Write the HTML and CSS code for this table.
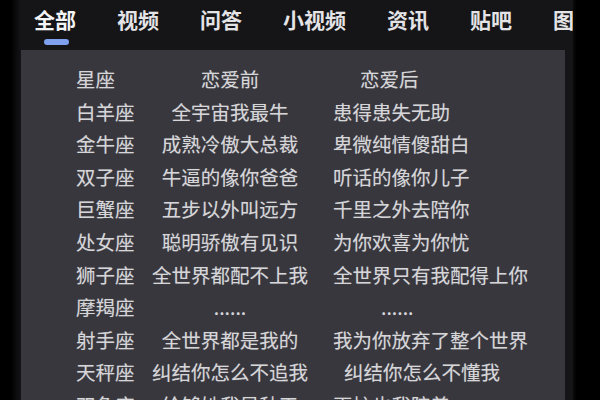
FILE: index.html
```html
<!DOCTYPE html>
<html lang="zh-CN">
<head>
<meta charset="utf-8">
<title>星座 恋爱前 恋爱后</title>
<link rel="stylesheet" href="styles.css">
</head>
<body>
<div class="frame">
  <div class="edge-left"></div>
  <main class="screen">
    <nav class="tabs">
      <div class="tab active">全部<span class="indicator"></span></div>
      <div class="tab">视频</div>
      <div class="tab">问答</div>
      <div class="tab">小视频</div>
      <div class="tab">资讯</div>
      <div class="tab">贴吧</div>
      <div class="tab">图片</div>
    </nav>
    <section class="card">
      <div class="table">
        <div class="c1">星座</div><div class="c2">恋爱前</div><div class="c3 head">恋爱后</div>
        <div class="c1">白羊座</div><div class="c2">全宇宙我最牛</div><div class="c3">患得患失无助</div>
        <div class="c1">金牛座</div><div class="c2">成熟冷傲大总裁</div><div class="c3">卑微纯情傻甜白</div>
        <div class="c1">双子座</div><div class="c2">牛逼的像你爸爸</div><div class="c3">听话的像你儿子</div>
        <div class="c1">巨蟹座</div><div class="c2">五步以外叫远方</div><div class="c3">千里之外去陪你</div>
        <div class="c1">处女座</div><div class="c2">聪明骄傲有见识</div><div class="c3">为你欢喜为你忧</div>
        <div class="c1">狮子座</div><div class="c2">全世界都配不上我</div><div class="c3">全世界只有我配得上你</div>
        <div class="c1">摩羯座</div><div class="c2 dots">......</div><div class="c3 dots">......</div>
        <div class="c1">射手座</div><div class="c2">全世界都是我的</div><div class="c3">我为你放弃了整个世界</div>
        <div class="c1">天秤座</div><div class="c2">纠结你怎么不追我</div><div class="c3 indent">纠结你怎么不懂我</div>
        <div class="c1">双鱼座</div><div class="c2">给够她我是秋天</div><div class="c3">再忙也我陪着</div>
      </div>
    </section>
  </main>
  <div class="edge-right"></div>
</div>
</body>
</html>
```

FILE: styles.css
```css
html, body {
  margin: 0;
  padding: 0;
  background: #000;
  width: 600px;
  height: 400px;
  overflow: hidden;
}

.frame {
  display: flex;
  width: 600px;
  height: 400px;
}

.edge-left {
  width: 20px;
  flex: none;
  background: linear-gradient(to right, #000 0, #000 11px, #0b0b0d 16px, #121214 20px);
}

.edge-right {
  width: 27px;
  flex: none;
  background: linear-gradient(to right, #0a0a0b 0, #000 4px, #000 100%);
}

.screen {
  flex: 1;
  min-width: 0;
  background: #151517;
  display: flex;
  flex-direction: column;
  overflow: hidden;
  font-family: "Noto Sans CJK SC", "Noto Sans", sans-serif;
}

.tabs {
  height: 50px;
  flex: none;
  display: flex;
  gap: 41px;
  padding-left: 14px;
  white-space: nowrap;
  box-sizing: border-box;
}

.tab {
  position: relative;
  font-size: 21px;
  font-weight: 700;
  line-height: 38px;
  color: #e4e4e6;
  flex: none;
}

.tab.active {
  color: #f4f4f6;
}

.indicator {
  position: absolute;
  left: 10px;
  top: 39px;
  width: 25px;
  height: 6px;
  border-radius: 3px;
  background: #7ea0ee;
}

.card {
  flex: 1;
  margin: 0 8px 0 1px;
  background: #37373d;
  padding-top: 13px;
  overflow: hidden;
}

.table {
  display: grid;
  grid-template-columns: 74px 160px 1fr;
  grid-auto-rows: 32.6px;
  padding-left: 55px;
  font-size: 19.5px;
  line-height: 32.6px;
  color: #d6d6d9;
  white-space: nowrap;
  text-shadow: 0 0 1px rgba(220, 220, 225, 0.35);
}

.c1 {
  text-align: left;
}

.c2 {
  text-align: center;
}

.c3 {
  text-align: left;
  padding-left: 23px;
}

.c3.head {
  padding-left: 50px;
}

.c3.dots {
  padding-left: 71px;
}

.c3.indent {
  padding-left: 34px;
}
```
